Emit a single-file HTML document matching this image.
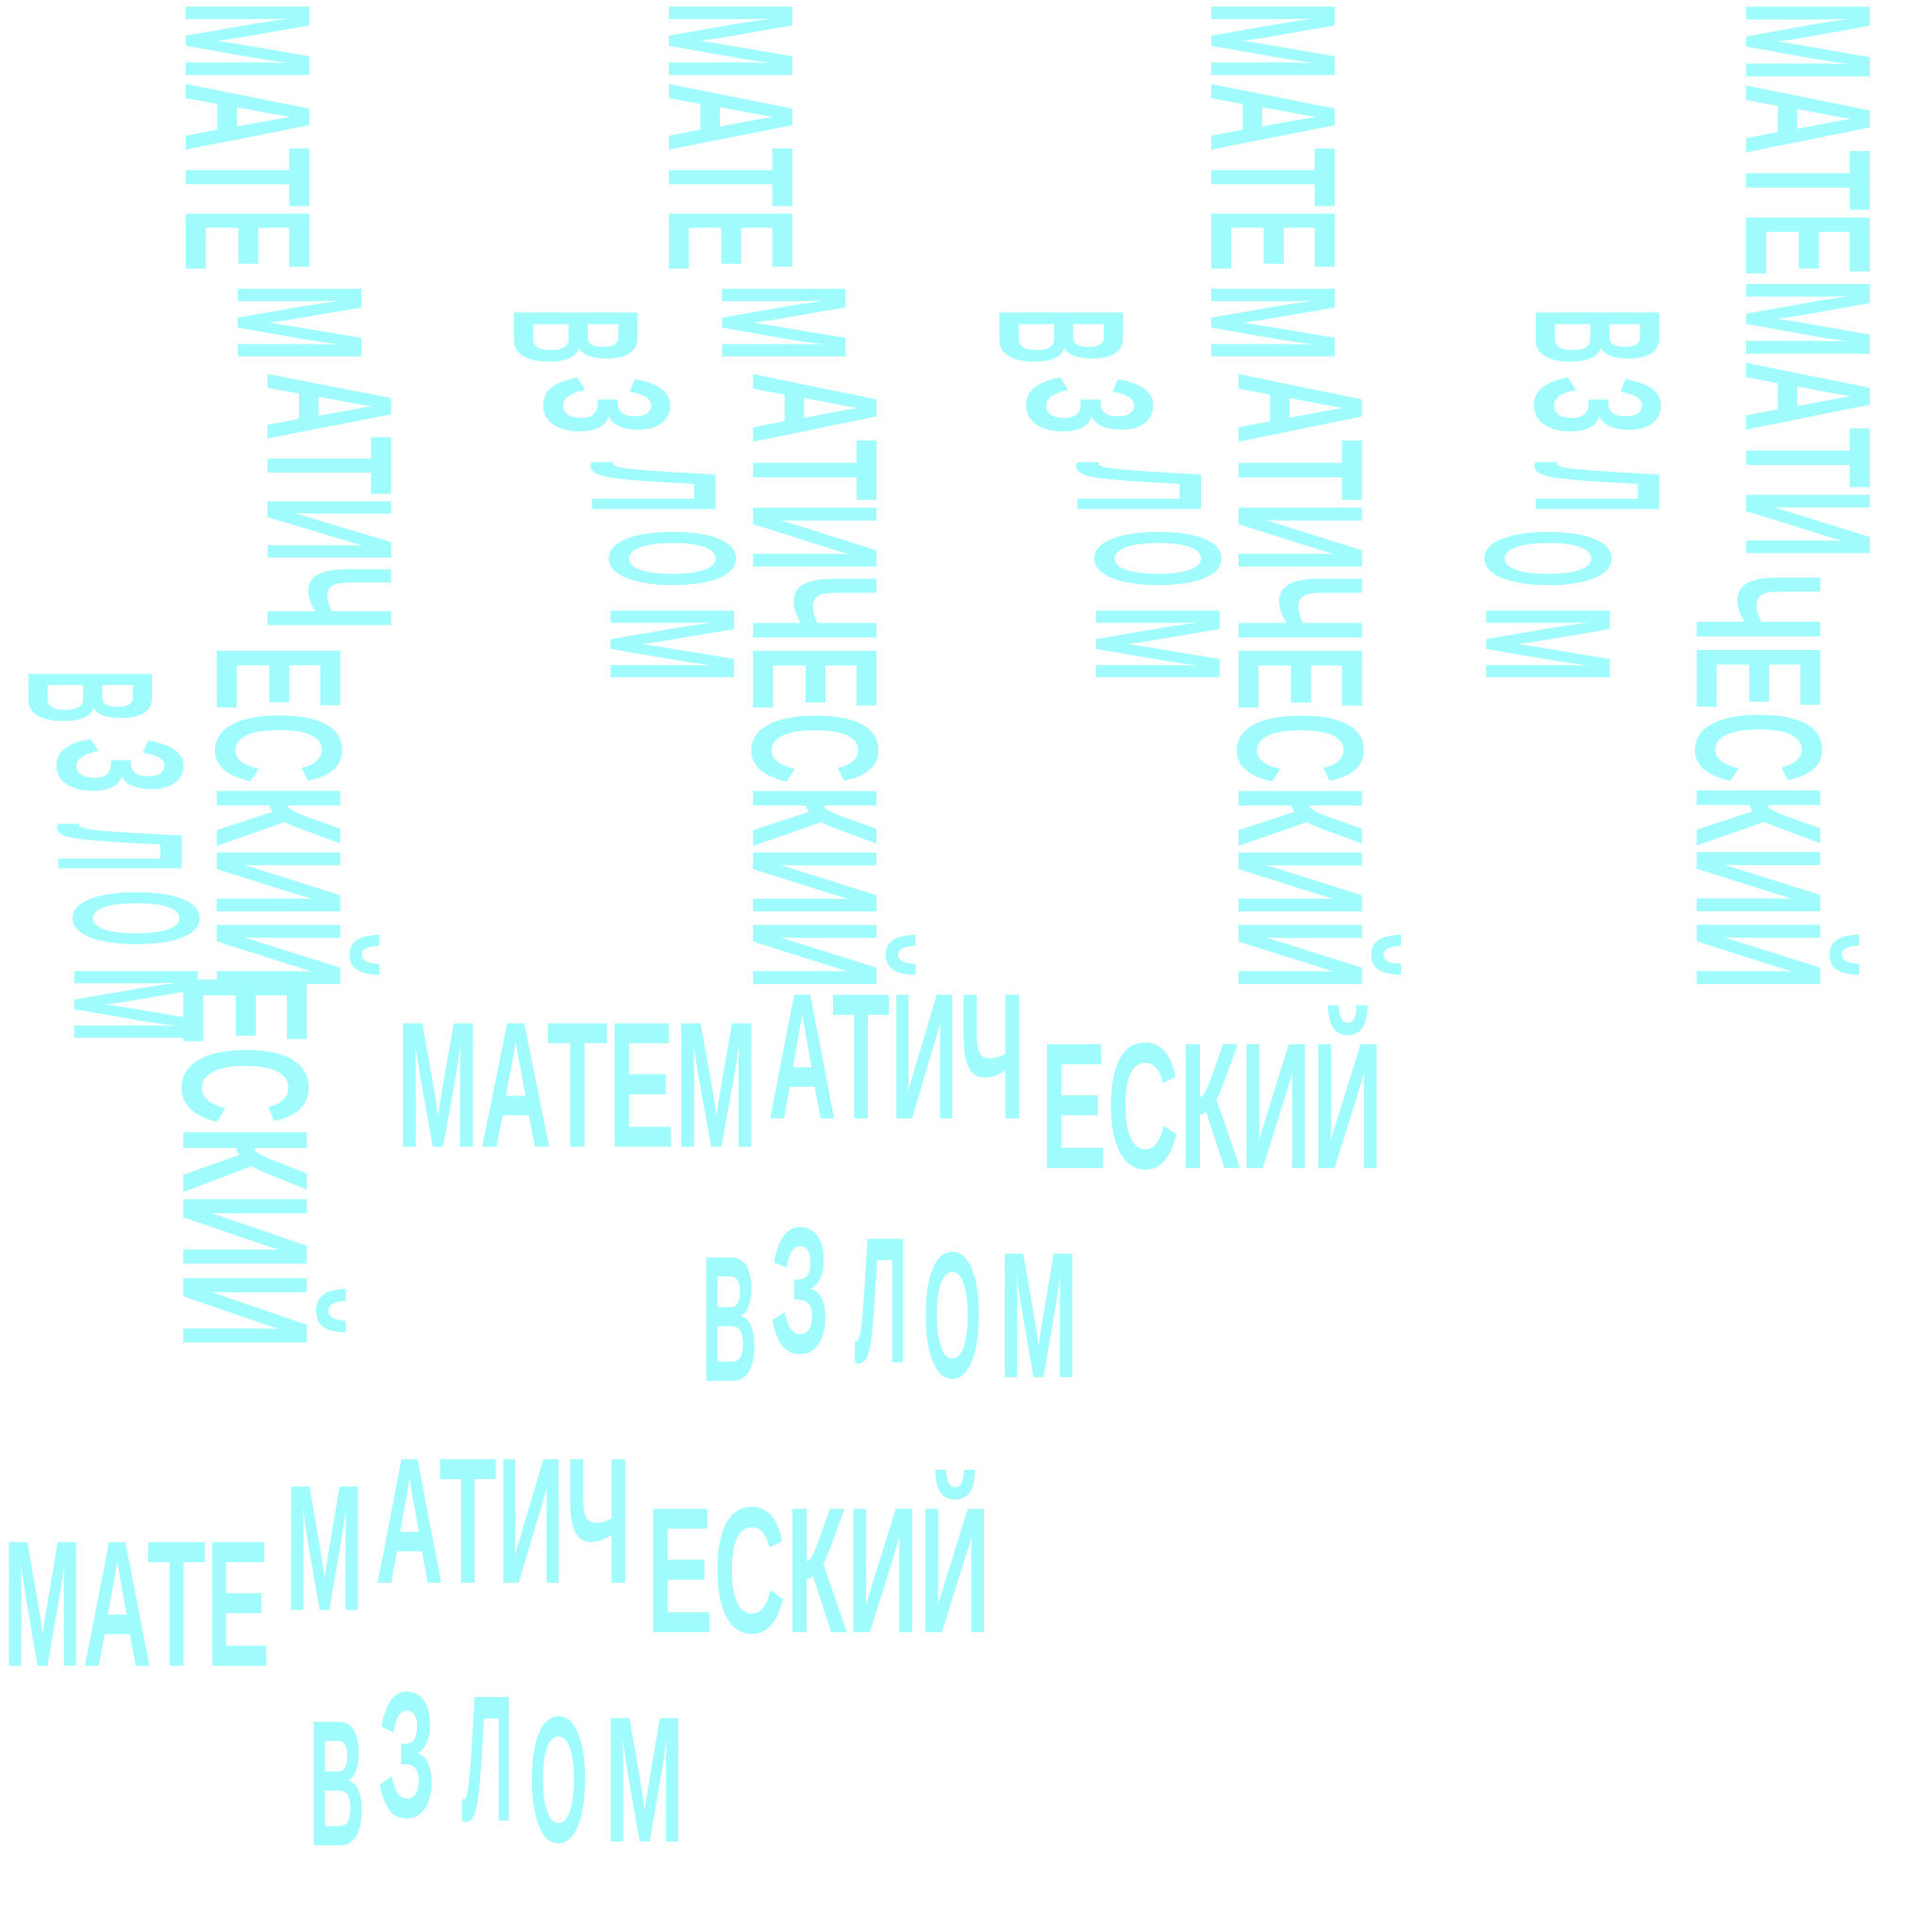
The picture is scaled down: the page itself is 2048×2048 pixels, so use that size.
<!DOCTYPE html>
<html>
<head>
<meta charset="utf-8">
<style>
html,body{margin:0;padding:0;background:#ffffff;}
svg{display:block;}
text{font-family:"Liberation Sans Narrow","Liberation Sans","DejaVu Sans",sans-serif;font-size:145px;font-weight:bold;fill:#a0fcfc;}
</style>
</head>
<body>
<svg width="2048" height="2048" viewBox="0 0 1560 1560" xmlns="http://www.w3.org/2000/svg">
<rect width="1560" height="1560" fill="#ffffff"/>

<!-- Horizontal group A -->
<text x="320" y="926" textLength="292" lengthAdjust="spacingAndGlyphs">МАТЕМ</text>
<text x="620" y="903" textLength="208" lengthAdjust="spacingAndGlyphs">АТИЧ</text>
<text x="840" y="943" textLength="277" lengthAdjust="spacingAndGlyphs">ЕСКИЙ</text>
<text x="566" y="1115" textLength="46" lengthAdjust="spacingAndGlyphs">В</text>
<text x="622" y="1092" textLength="48" lengthAdjust="spacingAndGlyphs">З</text>
<text x="690" y="1100" textLength="43" lengthAdjust="spacingAndGlyphs">Л</text>
<text x="745" y="1112" textLength="48" lengthAdjust="spacingAndGlyphs">О</text>
<text x="806" y="1112" textLength="65" lengthAdjust="spacingAndGlyphs">М</text>

<!-- Horizontal group B -->
<text x="2" y="1345" textLength="216" lengthAdjust="spacingAndGlyphs">МАТЕ</text>
<text x="230" y="1300" textLength="64" lengthAdjust="spacingAndGlyphs">М</text>
<text x="303" y="1278" textLength="207" lengthAdjust="spacingAndGlyphs">АТИЧ</text>
<text x="522" y="1318" textLength="278" lengthAdjust="spacingAndGlyphs">ЕСКИЙ</text>
<text x="249" y="1490" textLength="46" lengthAdjust="spacingAndGlyphs">В</text>
<text x="305" y="1467" textLength="47" lengthAdjust="spacingAndGlyphs">З</text>
<text x="373" y="1470" textLength="42" lengthAdjust="spacingAndGlyphs">Л</text>
<text x="427" y="1487" textLength="48" lengthAdjust="spacingAndGlyphs">О</text>
<text x="488" y="1487" textLength="65" lengthAdjust="spacingAndGlyphs">М</text>

<!-- Vertical column 1 -->
<g transform="translate(250,0) rotate(90)"><text x="0" y="100" textLength="220" lengthAdjust="spacingAndGlyphs">МАТЕ</text></g>
<g transform="translate(292,228) rotate(90)"><text x="0" y="100" textLength="65" lengthAdjust="spacingAndGlyphs">М</text></g>
<g transform="translate(316,300) rotate(90)"><text x="0" y="100" textLength="210" lengthAdjust="spacingAndGlyphs">АТИЧ</text></g>
<g transform="translate(275,520) rotate(90)"><text x="0" y="100" textLength="280" lengthAdjust="spacingAndGlyphs">ЕСКИЙ</text></g>
<g transform="translate(248,785) rotate(90)"><text x="0" y="100" textLength="305" lengthAdjust="spacingAndGlyphs">ЕСКИЙ</text></g>

<!-- Vertical column 2 -->
<g transform="translate(640,0) rotate(90)"><text x="0" y="100" textLength="220" lengthAdjust="spacingAndGlyphs">МАТЕ</text></g>
<g transform="translate(683,228) rotate(90)"><text x="0" y="100" textLength="65" lengthAdjust="spacingAndGlyphs">М</text></g>
<g transform="translate(708,300) rotate(90)"><text x="0" y="100" textLength="500" lengthAdjust="spacingAndGlyphs">АТИЧЕСКИЙ</text></g>

<!-- Vertical column 3 -->
<g transform="translate(1078,0) rotate(90)"><text x="0" y="100" textLength="220" lengthAdjust="spacingAndGlyphs">МАТЕ</text></g>
<g transform="translate(1078,228) rotate(90)"><text x="0" y="100" textLength="65" lengthAdjust="spacingAndGlyphs">М</text></g>
<g transform="translate(1100,300) rotate(90)"><text x="0" y="100" textLength="500" lengthAdjust="spacingAndGlyphs">АТИЧЕСКИЙ</text></g>

<!-- Vertical column 4 -->
<g transform="translate(1510,0) rotate(90)"><text x="0" y="100" textLength="452" lengthAdjust="spacingAndGlyphs">МАТЕМАТИ</text></g>
<g transform="translate(1470,462) rotate(90)"><text x="0" y="100" textLength="338" lengthAdjust="spacingAndGlyphs">ЧЕСКИЙ</text></g>

<!-- Vertical ВЗЛОМ a -->
<g transform="translate(123,540) rotate(90)"><text x="0" y="100" textLength="45" lengthAdjust="spacingAndGlyphs">В</text></g>
<g transform="translate(147,595) rotate(90)"><text x="0" y="100" textLength="47" lengthAdjust="spacingAndGlyphs">З</text></g>
<g transform="translate(147,665) rotate(90)"><text x="0" y="100" textLength="40" lengthAdjust="spacingAndGlyphs">Л</text></g>
<g transform="translate(160,718) rotate(90)"><text x="0" y="100" textLength="47" lengthAdjust="spacingAndGlyphs">О</text></g>
<g transform="translate(160,779) rotate(90)"><text x="0" y="100" textLength="64" lengthAdjust="spacingAndGlyphs">М</text></g>

<!-- Vertical ВЗЛОМ b -->
<g transform="translate(515,248) rotate(90)"><text x="0" y="100" textLength="47" lengthAdjust="spacingAndGlyphs">В</text></g>
<g transform="translate(540,303) rotate(90)"><text x="0" y="100" textLength="49" lengthAdjust="spacingAndGlyphs">З</text></g>
<g transform="translate(578,373) rotate(90)"><text x="0" y="100" textLength="42" lengthAdjust="spacingAndGlyphs">Л</text></g>
<g transform="translate(593,427) rotate(90)"><text x="0" y="100" textLength="48" lengthAdjust="spacingAndGlyphs">О</text></g>
<g transform="translate(593,488) rotate(90)"><text x="0" y="100" textLength="64" lengthAdjust="spacingAndGlyphs">М</text></g>

<!-- Vertical ВЗЛОМ c -->
<g transform="translate(907,248) rotate(90)"><text x="0" y="100" textLength="47" lengthAdjust="spacingAndGlyphs">В</text></g>
<g transform="translate(930,303) rotate(90)"><text x="0" y="100" textLength="49" lengthAdjust="spacingAndGlyphs">З</text></g>
<g transform="translate(970,373) rotate(90)"><text x="0" y="100" textLength="42" lengthAdjust="spacingAndGlyphs">Л</text></g>
<g transform="translate(985,427) rotate(90)"><text x="0" y="100" textLength="48" lengthAdjust="spacingAndGlyphs">О</text></g>
<g transform="translate(985,488) rotate(90)"><text x="0" y="100" textLength="64" lengthAdjust="spacingAndGlyphs">М</text></g>

<!-- Vertical ВЗЛОМ d -->
<g transform="translate(1340,248) rotate(90)"><text x="0" y="100" textLength="47" lengthAdjust="spacingAndGlyphs">В</text></g>
<g transform="translate(1340,303) rotate(90)"><text x="0" y="100" textLength="49" lengthAdjust="spacingAndGlyphs">З</text></g>
<g transform="translate(1340,373) rotate(90)"><text x="0" y="100" textLength="42" lengthAdjust="spacingAndGlyphs">Л</text></g>
<g transform="translate(1300,427) rotate(90)"><text x="0" y="100" textLength="48" lengthAdjust="spacingAndGlyphs">О</text></g>
<g transform="translate(1300,488) rotate(90)"><text x="0" y="100" textLength="64" lengthAdjust="spacingAndGlyphs">М</text></g>
</svg>
</body>
</html>
